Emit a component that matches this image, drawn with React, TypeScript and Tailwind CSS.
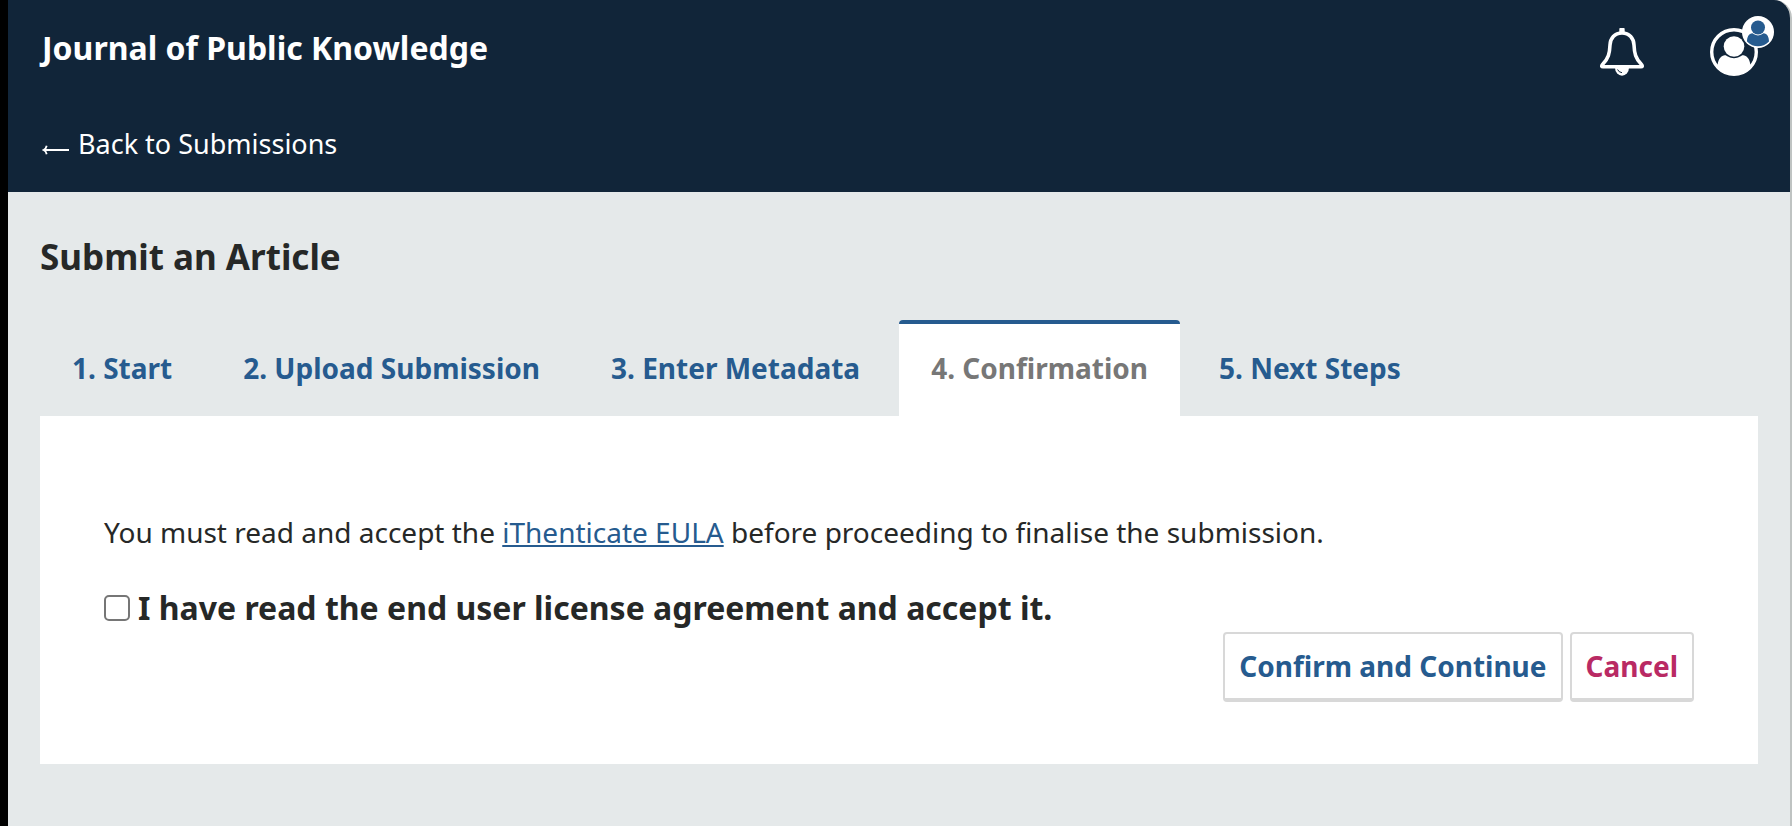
import { useState } from "react";

const tabs = [
  "1. Start",
  "2. Upload Submission",
  "3. Enter Metadata",
  "4. Confirmation",
  "5. Next Steps",
];

function BellIcon() {
  return (
    <svg viewBox="0 0 44 48" className="h-12 w-11" fill="none" aria-hidden="true">
      <path d="M19.300 5V1.700a2.700 2.700 0 0 1 5.400 0V5z" fill="#fff" />
      <path
        d="M22 5C14.500 5 10.300 10.400 10 17 9.700 25 8.500 30.500 2.300 36.800 1.300 38.300 1.800 38.800 3 38.800H41C42.200 38.800 42.700 38.300 41.700 36.800 35.500 30.500 34.300 25 34 17 33.700 10.400 29.500 5 22 5z"
        stroke="#fff"
        strokeWidth="3.600"
        strokeLinejoin="round"
      />
      <path d="M15 39.500a7 8.300 0 0 0 14 0z" fill="#fff" />
      <path d="M17.600 41.500a5.500 4.500 0 0 0 4.400 3.200" stroke="#112539" strokeWidth="1" />
    </svg>
  );
}

function UserIcon() {
  return (
    <svg viewBox="0 0 48 48" className="h-12 w-12" fill="none" aria-hidden="true">
      <circle cx="24" cy="24" r="22.300" stroke="#fff" strokeWidth="3.400" />
      <circle cx="24" cy="18.500" r="10.300" fill="#fff" />
      <path
        d="M7.500 39.500C7.500 32.500 10 28 14.500 27.200c1.500-.2 2.200.5 3.500 1.400 3.700 2.200 8.300 2.200 12 0 1.300-.9 2-1.600 3.500-1.400 4.500.8 7 5.300 7 12.300C36 44.500 30 47 24 47S12 44.500 7.500 39.500z"
        fill="#fff"
      />
    </svg>
  );
}

function UserBadge() {
  return (
    <svg viewBox="0 0 32 32" className="h-8 w-8" aria-hidden="true">
      <circle cx="16" cy="16" r="16" fill="#fff" />
      <circle cx="16" cy="11.500" r="7" fill="#265b8f" />
      <path
        d="M5 25.500C5 20.800 6.700 18 9.600 17.400c1-.2 1.500.3 2.400.9 2.500 1.500 5.500 1.500 8 0 .9-.6 1.400-1.100 2.400-.9 2.900.6 4.600 3.400 4.600 8.100C23.500 29 20 30.300 16 30.300S8.500 29 5 25.500z"
        fill="#265b8f"
      />
    </svg>
  );
}

export default function App() {
  const [active, setActive] = useState(3);

  return (
    <div className="min-h-screen border-l-8 border-black bg-white font-['Noto_Sans',sans-serif] text-[28px] leading-10 text-[#262827]">
      <div className="flex min-h-screen flex-col overflow-hidden rounded-tr-[18px] border-r-2 border-[#bfc3c2] bg-[#e5e9ea]">
        <header className="flex h-48 items-start justify-between bg-[#112539] pl-[34px] pr-4 text-white">
          <div className="flex flex-col gap-14 pt-7">
            <a href="#journal" className="text-[32px] font-bold">
              Journal of Public Knowledge
            </a>
            <a href="#submissions" className="flex items-center gap-2 text-[27px] leading-10">
              <svg viewBox="0 0 28 10" className="mt-3 h-[10px] w-7" fill="none" stroke="#fff" strokeWidth="1.800" aria-hidden="true">
                <path d="M2 5H27M4.700 .8C4.300 2.800 3.500 4.200 1.500 5 3.500 5.800 4.300 7.200 4.700 9.200" />
              </svg>
              Back to Submissions
            </a>
          </div>
          <div className="flex items-start gap-[66px] pt-7">
            <button type="button" aria-label="Notifications">
              <BellIcon />
            </button>
            <button type="button" aria-label="Account" className="relative pr-4">
              <UserIcon />
              <span className="absolute -top-3 right-0">
                <UserBadge />
              </span>
            </button>
          </div>
        </header>

        <main className="px-8 pb-14 pt-10">
          <h1 className="text-[35px] font-bold leading-[50px]">Submit an Article</h1>
          <div role="tablist" className="mt-[38px] flex gap-[7px]">
            {tabs.map((label, i) => (
              <button
                key={label}
                type="button"
                role="tab"
                aria-selected={i === active}
                onClick={() => setActive(i)}
                className={
                  i === active
                    ? "h-24 rounded-t-sm border-t-4 border-[#265b8f] bg-white px-8 pb-1 font-bold text-[#777777]"
                    : "h-24 border-t-4 border-transparent px-8 pb-1 font-bold text-[#265b8f]"
                }
              >
                {label}
              </button>
            ))}
          </div>
          <section className="bg-white px-16 pb-[62px] pt-24">
            <p>
              You must read and accept the{" "}
              <a href="#eula" className="text-[#265b8f] underline">
                iThenticate EULA
              </a>{" "}
              before proceeding to finalise the submission.
            </p>
            <div className="mt-8 flex items-center gap-2 text-[32px] font-bold leading-12">
              <input
                id="accept-eula"
                type="checkbox"
                className="size-[26px] appearance-none rounded-[5px] border-2 border-[#767676] bg-white checked:bg-[#265b8f]"
              />
              <label htmlFor="accept-eula">I have read the end user license agreement and accept it.</label>
            </div>
            <div className="flex justify-end gap-[7px]">
              <button
                type="button"
                className="h-[70px] rounded-sm border-2 border-b-4 border-[#d8d8d8] bg-white px-[14px] font-bold text-[#265b8f]"
              >
                Confirm and Continue
              </button>
              <button
                type="button"
                className="h-[70px] rounded-sm border-2 border-b-4 border-[#d8d8d8] bg-white px-[14px] font-bold text-[#b92a64]"
              >
                Cancel
              </button>
            </div>
          </section>
        </main>
      </div>
    </div>
  );
}
